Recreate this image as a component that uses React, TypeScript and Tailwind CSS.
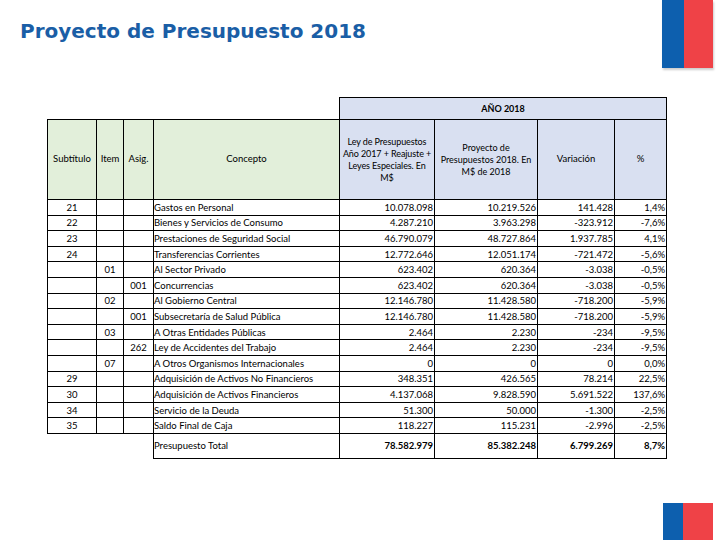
import React from "react";

type Row = { s: string; i: string; a: string; c: string; l: string; p: string; v: string; pc: string };

const rows: Row[] = [
  { s: "21", i: "", a: "", c: "Gastos en Personal", l: "10.078.098", p: "10.219.526", v: "141.428", pc: "1,4%" },
  { s: "22", i: "", a: "", c: "Bienes y Servicios de Consumo", l: "4.287.210", p: "3.963.298", v: "-323.912", pc: "-7,6%" },
  { s: "23", i: "", a: "", c: "Prestaciones de Seguridad Social", l: "46.790.079", p: "48.727.864", v: "1.937.785", pc: "4,1%" },
  { s: "24", i: "", a: "", c: "Transferencias Corrientes", l: "12.772.646", p: "12.051.174", v: "-721.472", pc: "-5,6%" },
  { s: "", i: "01", a: "", c: "Al Sector Privado", l: "623.402", p: "620.364", v: "-3.038", pc: "-0,5%" },
  { s: "", i: "", a: "001", c: "Concurrencias", l: "623.402", p: "620.364", v: "-3.038", pc: "-0,5%" },
  { s: "", i: "02", a: "", c: "Al Gobierno Central", l: "12.146.780", p: "11.428.580", v: "-718.200", pc: "-5,9%" },
  { s: "", i: "", a: "001", c: "Subsecretaría de Salud Pública", l: "12.146.780", p: "11.428.580", v: "-718.200", pc: "-5,9%" },
  { s: "", i: "03", a: "", c: "A Otras Entidades Públicas", l: "2.464", p: "2.230", v: "-234", pc: "-9,5%" },
  { s: "", i: "", a: "262", c: "Ley de Accidentes del Trabajo", l: "2.464", p: "2.230", v: "-234", pc: "-9,5%" },
  { s: "", i: "07", a: "", c: "A Otros Organismos Internacionales", l: "0", p: "0", v: "0", pc: "0,0%" },
  { s: "29", i: "", a: "", c: "Adquisición de Activos No Financieros", l: "348.351", p: "426.565", v: "78.214", pc: "22,5%" },
  { s: "30", i: "", a: "", c: "Adquisición de Activos Financieros", l: "4.137.068", p: "9.828.590", v: "5.691.522", pc: "137,6%" },
  { s: "34", i: "", a: "", c: "Servicio de la Deuda", l: "51.300", p: "50.000", v: "-1.300", pc: "-2,5%" },
  { s: "35", i: "", a: "", c: "Saldo Final de Caja", l: "118.227", p: "115.231", v: "-2.996", pc: "-2,5%" },
];

const cell = "border border-black";
const num = "border border-black text-right pr-[1px]";

export default function App() {
  return (
    <div className="w-[720px] h-[540px] bg-white overflow-hidden flex flex-col" style={{ fontFamily: "Lato, 'Liberation Sans', sans-serif" }}>
      <div className="flex justify-between pl-[20px] pr-[7px] h-[68px] shrink-0">
        <div
          className="mt-[21px] text-[20px] leading-none font-bold text-[#1a5ea6]"
          style={{ fontFamily: "'DejaVu Sans', Verdana, sans-serif" }}
        >
          Proyecto de Presupuesto 2018
        </div>
        <div className="flex w-[51px] h-[68px] shadow-[1px_2px_2px_rgba(0,0,0,0.2)]">
          <div className="w-[22px] bg-[#0d5fae]" />
          <div className="flex-1 bg-[#ef4247]" />
        </div>
      </div>

      <table className="ml-[47px] mt-[29px] border-collapse table-fixed text-[9.5px] text-black w-[619px]">
        <colgroup>
          <col className="w-[49px]" />
          <col className="w-[27px]" />
          <col className="w-[30px]" />
          <col className="w-[186px]" />
          <col className="w-[95px]" />
          <col className="w-[103px]" />
          <col className="w-[77px]" />
          <col className="w-[52px]" />
        </colgroup>
        <tbody>
          <tr className="h-[22px]">
            <td colSpan={4} />
            <td colSpan={4} className={`${cell} bg-[#d9e0f1] text-center font-bold text-[9px]`}>AÑO 2018</td>
          </tr>
          <tr className="h-[80px]">
            <td className={`${cell} bg-[#e2efda] text-center`}>Subtítulo</td>
            <td className={`${cell} bg-[#e2efda] text-center`}>Item</td>
            <td className={`${cell} bg-[#e2efda] text-center`}>Asig.</td>
            <td className={`${cell} bg-[#e2efda] text-center`}>Concepto</td>
            <td className={`${cell} bg-[#d9e0f1] text-center leading-[12px] text-[9px] px-0 tracking-[-0.1px]`}>
              Ley de Presupuestos<br />Año 2017 + Reajuste +<br />Leyes Especiales. En<br />M$
            </td>
            <td className={`${cell} bg-[#d9e0f1] text-center leading-[12px] text-[9px] px-0`}>
              Proyecto de<br />Presupuestos 2018. En<br />M$ de 2018
            </td>
            <td className={`${cell} bg-[#d9e0f1] text-center`}>Variación</td>
            <td className={`${cell} bg-[#d9e0f1] text-center`}>%</td>
          </tr>
          {rows.map((r, idx) => (
            <tr key={idx} className="h-[15.6px] leading-[13px]">
              <td className={`${cell} text-center`}>{r.s}</td>
              <td className={`${cell} text-center`}>{r.i}</td>
              <td className={`${cell} text-center`}>{r.a}</td>
              <td className={`${cell} pl-0 whitespace-nowrap`}>{r.c}</td>
              <td className={num}>{r.l}</td>
              <td className={num}>{r.p}</td>
              <td className={num}>{r.v}</td>
              <td className={num}>{r.pc}</td>
            </tr>
          ))}
          <tr className="h-[25px]">
            <td colSpan={3} />
            <td className={`${cell}`}>Presupuesto Total</td>
            <td className={`${num} font-bold`}>78.582.979</td>
            <td className={`${num} font-bold`}>85.382.248</td>
            <td className={`${num} font-bold`}>6.799.269</td>
            <td className={`${num} font-bold`}>8,7%</td>
          </tr>
        </tbody>
      </table>

      <div className="mt-auto self-end mr-[7px] flex w-[50px] h-[37px] shrink-0">
        <div className="w-[20px] bg-[#0d5fae]" />
        <div className="flex-1 bg-[#ef4247]" />
      </div>
    </div>
  );
}
